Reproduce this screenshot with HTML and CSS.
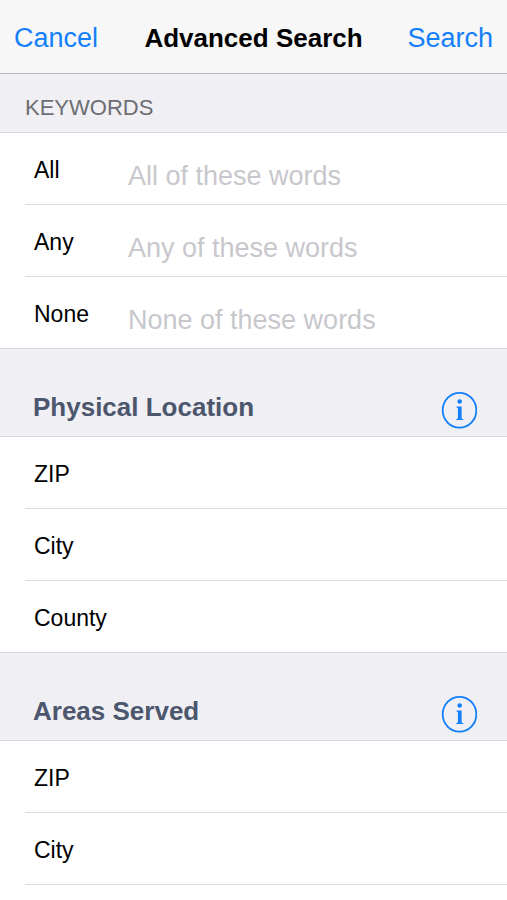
FILE: index.html
```html
<!DOCTYPE html>
<html lang="en">
<head>
<meta charset="utf-8">
<meta name="viewport" content="width=device-width, initial-scale=1">
<title>Advanced Search</title>
<link rel="stylesheet" href="styles.css">
</head>
<body>
<form class="search-form">
  <header class="navbar">
    <button class="nav-button" type="button">Cancel</button>
    <h1 class="nav-title">Advanced Search</h1>
    <button class="nav-button nav-button-end" type="submit">Search</button>
  </header>

  <section>
    <h2 class="list-heading">KEYWORDS</h2>
    <div class="rows">
      <div class="row"><label class="row-label" for="kw-all">All</label><input class="row-input" id="kw-all" type="text" placeholder="All of these words"></div>
      <div class="row"><label class="row-label" for="kw-any">Any</label><input class="row-input" id="kw-any" type="text" placeholder="Any of these words"></div>
      <div class="row"><label class="row-label" for="kw-none">None</label><input class="row-input" id="kw-none" type="text" placeholder="None of these words"></div>
    </div>
  </section>

  <section>
    <div class="section-heading">
      <h2 class="section-title">Physical Location</h2>
      <button class="info-button" type="button" aria-label="About physical location">
        <svg class="info-icon" viewBox="0 0 36 38" aria-hidden="true">
          <ellipse cx="18.500" cy="19.300" rx="16.800" ry="17.400" fill="none" stroke="currentColor" stroke-width="1.800"/>
          <circle cx="18.700" cy="10.500" r="2.300" fill="currentColor"/>
          <path d="M15.500 15.400h5.100v12l1.500.6v1.100h-6.800v-1.100l1.600-.6v-10.300l-1.400-.6z" fill="currentColor"/>
        </svg>
      </button>
    </div>
    <div class="rows">
      <div class="row"><label class="row-label" for="loc-zip">ZIP</label><input class="row-input" id="loc-zip" type="text"></div>
      <div class="row"><label class="row-label" for="loc-city">City</label><input class="row-input" id="loc-city" type="text"></div>
      <div class="row"><label class="row-label" for="loc-county">County</label><input class="row-input" id="loc-county" type="text"></div>
    </div>
  </section>

  <section>
    <div class="section-heading">
      <h2 class="section-title">Areas Served</h2>
      <button class="info-button" type="button" aria-label="About areas served">
        <svg class="info-icon" viewBox="0 0 36 38" aria-hidden="true">
          <ellipse cx="18.500" cy="19.300" rx="16.800" ry="17.400" fill="none" stroke="currentColor" stroke-width="1.800"/>
          <circle cx="18.700" cy="10.500" r="2.300" fill="currentColor"/>
          <path d="M15.500 15.400h5.100v12l1.500.6v1.100h-6.800v-1.100l1.600-.6v-10.300l-1.400-.6z" fill="currentColor"/>
        </svg>
      </button>
    </div>
    <div class="rows rows-open">
      <div class="row"><label class="row-label" for="area-zip">ZIP</label><input class="row-input" id="area-zip" type="text"></div>
      <div class="row"><label class="row-label" for="area-city">City</label><input class="row-input" id="area-city" type="text"></div>
    </div>
  </section>
</form>
</body>
</html>
```
FILE: styles.css
```css
* {
  box-sizing: border-box;
}

body {
  margin: 0;
  background: #fff;
  color: #000;
  font-family: "Liberation Sans", Arial, sans-serif;
}

h1,
h2 {
  margin: 0;
}

button {
  padding: 0;
  border: 0;
  background: none;
  color: #137ffb;
  font: inherit;
}

.navbar {
  display: grid;
  grid-template-columns: 1fr auto 1fr;
  align-items: center;
  height: 74px;
  padding: 2px 14px 0;
  border-bottom: 1px solid #b8b8bd;
  background: #f7f7f7;
}

.nav-button {
  justify-self: start;
  font-size: 27px;
  line-height: 32px;
}

.nav-button-end {
  justify-self: end;
}

.nav-title {
  font-size: 26px;
  line-height: 32px;
}

.list-heading {
  height: 59px;
  padding: 22px 25px 0;
  border-bottom: 1px solid #d9d9dd;
  background: #efeff4;
  color: #6d6d72;
  font-size: 22px;
  font-weight: 400;
  line-height: 24px;
}

.rows {
  border-bottom: 1px solid #d9d9dd;
}

.row {
  display: flex;
  height: 72px;
  margin-left: 25px;
  padding-left: 9px;
  border-bottom: 1px solid #dcdcdf;
}

.row:last-child {
  height: 71px;
  border-bottom: 0;
}

.rows-open {
  border-bottom: 0;
}

.rows-open .row:last-child {
  height: 72px;
  border-bottom: 1px solid #dcdcdf;
}

.row-label {
  flex: 0 0 94px;
  padding-top: 23px;
  font-size: 23px;
  line-height: 28px;
}

.row-input {
  flex: 1;
  min-width: 0;
  padding: 16px 14px 0 0;
  border: 0;
  outline: 0;
  background: none;
  color: #000;
  font: 27px "Liberation Sans", Arial, sans-serif;
}

.row-input::placeholder {
  color: #c7c7cc;
  opacity: 1;
}

.section-heading {
  display: flex;
  align-items: flex-end;
  justify-content: space-between;
  height: 88px;
  padding: 0 30px 7px 33px;
  border-bottom: 1px solid #d9d9dd;
  background: #efeff4;
}

.section-title {
  padding-bottom: 6px;
  color: #4c566c;
  font-size: 26px;
  line-height: 32px;
}

.info-icon {
  display: block;
  width: 36px;
  height: 38px;
}
```
